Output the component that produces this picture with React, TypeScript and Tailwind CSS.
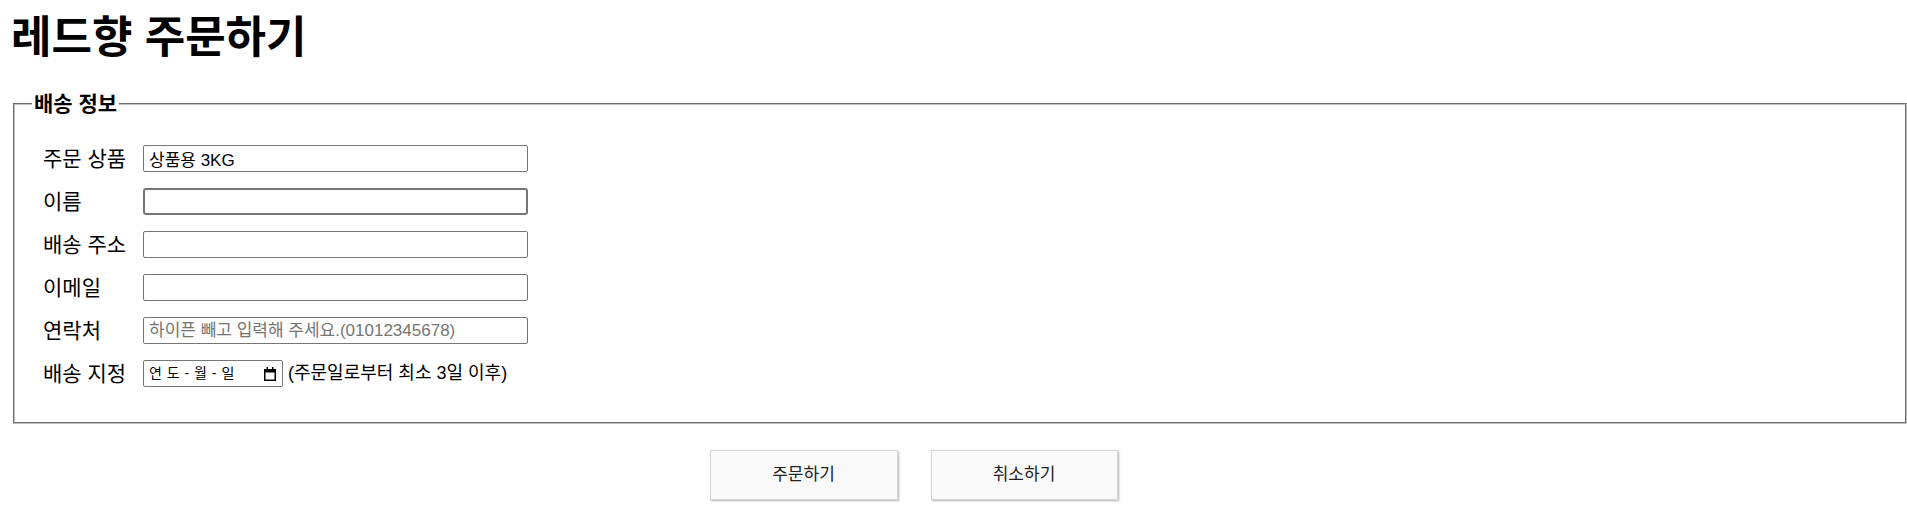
const font = "font-['Liberation_Sans','Noto_Sans_CJK_KR',sans-serif]";

const CalendarIcon = () => (
  <svg width="12" height="14" viewBox="0 0 12 14" className="shrink-0">
    <rect x="0.75" y="2.75" width="10.5" height="10.5" fill="none" stroke="#000" strokeWidth="1.5" />
    <rect x="0" y="2" width="12" height="3.5" fill="#000" />
    <rect x="2.5" y="0" width="1.5" height="3" fill="#000" />
    <rect x="8" y="0" width="1.5" height="3" fill="#000" />
  </svg>
);

const inputBox =
  "w-[385px] h-[27px] border border-[#767676] rounded-[2px] pl-[5px] text-[17px] text-black outline-none bg-white placeholder:text-[#757575]";

const App = () => {
  return (
    <div className={`${font} w-[1907px] min-h-[517px] bg-white text-black`}>
      <h1 className="pl-[11px] pt-[12px] text-[44px] font-bold leading-[52px]">레드향 주문하기</h1>

      <fieldset className="mt-[28px] ml-[13px] border-2 border-[#c0c0c0] [border-style:groove] pb-[35px]">
        <legend className="ml-[17px] px-[2px] text-[21px] font-bold leading-[24px]">배송 정보</legend>

        <div className="grid grid-cols-[100px_auto_1fr] items-center gap-y-[16px] pl-[28px] pt-[29px]">
          <label className="text-[21px] leading-[27px]">주문 상품</label>
          <input className={inputBox} defaultValue="상품용 3KG" readOnly />
          <span />

          <label className="text-[21px] leading-[27px]">이름</label>
          <input className={`${inputBox} border-2 border-[#101010] rounded-[3px]`} />
          <span />

          <label className="text-[21px] leading-[27px]">배송 주소</label>
          <input className={inputBox} />
          <span />

          <label className="text-[21px] leading-[27px]">이메일</label>
          <input className={inputBox} />
          <span />

          <label className="text-[21px] leading-[27px]">연락처</label>
          <input className={inputBox} placeholder="하이픈 빼고 입력해 주세요.(01012345678)" />
          <span />

          <label className="text-[21px] leading-[27px]">배송 지정</label>
          <div className="flex items-center gap-[5px]">
            <div className="flex items-center justify-between w-[140px] h-[27px] border border-[#767676] rounded-[2px] pl-[5px] pr-[6px]">
              <span className="text-[14px] tracking-[0.5px] whitespace-pre">연 도 - 월 - 일</span>
              <CalendarIcon />
            </div>
            <span className="text-[18px]">(주문일로부터 최소 3일 이후)</span>
          </div>
          <span />
        </div>
      </fieldset>

      <div className="flex justify-center gap-[33px] pr-[80px] pt-[26px]">
        <button className="w-[188px] h-[50px] bg-[#f9f9f9] border border-[#d6d6d6] shadow-[1px_1px_2px_#b5b5b5] text-[17px] text-[#222]">
          주문하기
        </button>
        <button className="w-[187px] h-[50px] bg-[#f9f9f9] border border-[#d6d6d6] shadow-[1px_1px_2px_#b5b5b5] text-[17px] text-[#222]">
          취소하기
        </button>
      </div>
    </div>
  );
};

export default App;
